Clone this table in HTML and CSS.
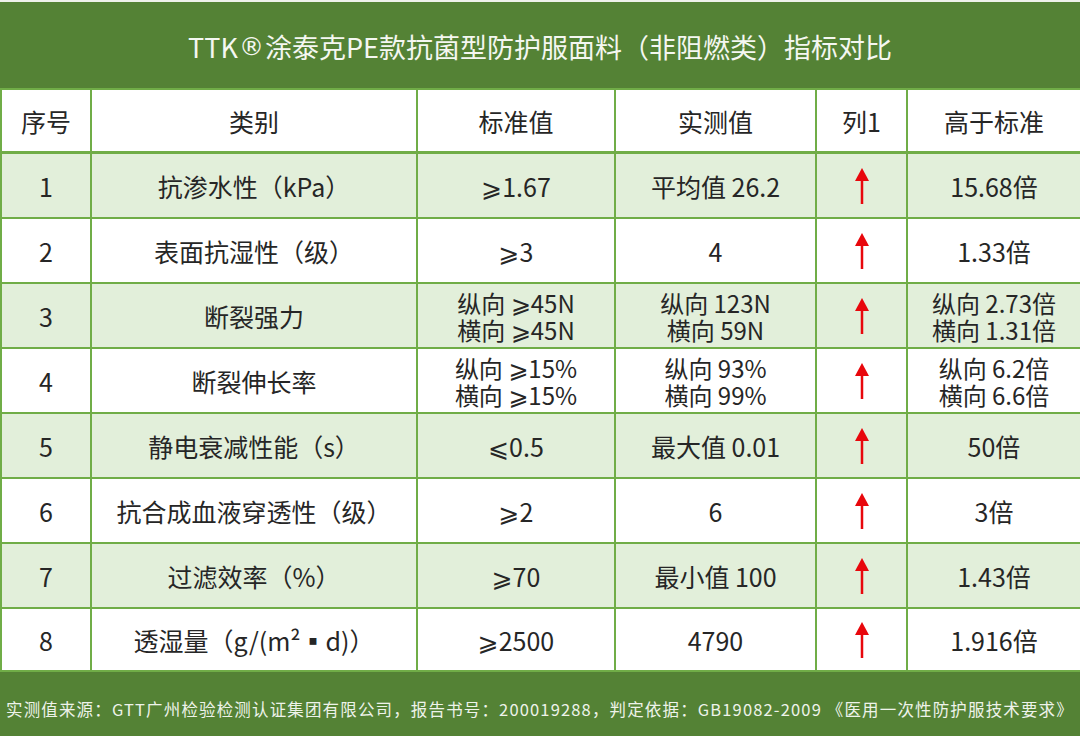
FILE: index.html
```html
<!DOCTYPE html>
<html lang="zh">
<head>
<meta charset="utf-8">
<title>TTK涂泰克PE款抗菌型防护服面料指标对比</title>
<link rel="stylesheet" href="styles.css">
</head>
<body>
<div class="page">
  <div class="title">TTK<span class="reg">®</span>涂泰克PE款抗菌型防护服面料（非阻燃类）指标对比</div>
  <table class="grid">
    <colgroup>
      <col class="c-no"><col class="c-cat"><col class="c-std"><col class="c-real"><col class="c-arrow"><col class="c-ratio">
    </colgroup>
    <thead>
      <tr class="head"><th>序号</th><th>类别</th><th>标准值</th><th>实测值</th><th>列1</th><th>高于标准</th></tr>
    </thead>
    <tbody>
      <tr class="odd"><td>1</td><td>抗渗水性（kPa）</td><td>⩾1.67</td><td>平均值 26.2</td><td><svg class="arrow" viewBox="0 0 16 36"><polygon points="8,0 1,13 15,13"/><rect x="6.75" y="11" width="2.5" height="25"/></svg></td><td>15.68倍</td></tr>
      <tr><td>2</td><td>表面抗湿性（级）</td><td>⩾3</td><td>4</td><td><svg class="arrow" viewBox="0 0 16 36"><polygon points="8,0 1,13 15,13"/><rect x="6.75" y="11" width="2.5" height="25"/></svg></td><td>1.33倍</td></tr>
      <tr class="odd two"><td>3</td><td>断裂强力</td><td><div class="ln">纵向 ⩾45N</div><div class="ln">横向 ⩾45N</div></td><td><div class="ln">纵向 123N</div><div class="ln">横向 59N</div></td><td><svg class="arrow" viewBox="0 0 16 36"><polygon points="8,0 1,13 15,13"/><rect x="6.75" y="11" width="2.5" height="25"/></svg></td><td><div class="ln">纵向 2.73倍</div><div class="ln">横向 1.31倍</div></td></tr>
      <tr class="two"><td>4</td><td>断裂伸长率</td><td><div class="ln">纵向 ⩾15%</div><div class="ln">横向 ⩾15%</div></td><td><div class="ln">纵向 93%</div><div class="ln">横向 99%</div></td><td><svg class="arrow" viewBox="0 0 16 36"><polygon points="8,0 1,13 15,13"/><rect x="6.75" y="11" width="2.5" height="25"/></svg></td><td><div class="ln">纵向 6.2倍</div><div class="ln">横向 6.6倍</div></td></tr>
      <tr class="odd"><td>5</td><td>静电衰减性能（s）</td><td>⩽0.5</td><td>最大值 0.01</td><td><svg class="arrow" viewBox="0 0 16 36"><polygon points="8,0 1,13 15,13"/><rect x="6.75" y="11" width="2.5" height="25"/></svg></td><td>50倍</td></tr>
      <tr><td>6</td><td>抗合成血液穿透性（级）</td><td>⩾2</td><td>6</td><td><svg class="arrow" viewBox="0 0 16 36"><polygon points="8,0 1,13 15,13"/><rect x="6.75" y="11" width="2.5" height="25"/></svg></td><td>3倍</td></tr>
      <tr class="odd"><td>7</td><td>过滤效率（%）</td><td>⩾70</td><td>最小值 100</td><td><svg class="arrow" viewBox="0 0 16 36"><polygon points="8,0 1,13 15,13"/><rect x="6.75" y="11" width="2.5" height="25"/></svg></td><td>1.43倍</td></tr>
      <tr class="last"><td>8</td><td>透湿量（g/(m²▪d)）</td><td>⩾2500</td><td>4790</td><td><svg class="arrow" viewBox="0 0 16 36"><polygon points="8,0 1,13 15,13"/><rect x="6.75" y="11" width="2.5" height="25"/></svg></td><td>1.916倍</td></tr>
    </tbody>
  </table>
  <div class="footer">实测值来源：GTT广州检验检测认证集团有限公司，报告书号：200019288，判定依据：GB19082-2009 《医用一次性防护服技术要求》</div>
</div>
</body>
</html>
```

FILE: styles.css
```css
html, body {
  margin: 0;
  padding: 0;
  background: #ffffff;
}

.page {
  width: 1080px;
  height: 736px;
  overflow: hidden;
  font-family: "Noto Sans CJK SC", "DejaVu Sans", sans-serif;
  color: #262626;
}

.title {
  height: 88px;
  border-top: 2px solid #eef2ea;
  background: #548235;
  color: #f4f7f1;
  font-size: 27px;
  display: flex;
  align-items: center;
  justify-content: center;
  padding-top: 2px;
  box-sizing: border-box;
}

.reg {
  font-family: "DejaVu Sans", sans-serif;
  font-size: 25px;
  margin: 0 1px;
}

.grid {
  width: 1080px;
  border-collapse: collapse;
  table-layout: fixed;
}

.c-no { width: 90px; }
.c-cat { width: 326px; }
.c-std { width: 198px; }
.c-real { width: 201px; }
.c-arrow { width: 91px; }
.c-ratio { width: 174px; }

.grid th,
.grid td {
  border: 2px solid #70ad47;
  text-align: center;
  vertical-align: middle;
  padding: 0;
  font-size: 25px;
  font-weight: 400;
  line-height: 30px;
}

.grid .head th {
  height: 61px;
  border-bottom: 3px solid #70ad47;
  background: #ffffff;
}

.grid tbody td {
  height: 63px;
}

.grid tr.last td {
  height: 61px;
}

.grid tr.odd td {
  background: #e2efda;
}

.ln {
  height: 27px;
  line-height: 27px;
  font-size: 24px;
}

.arrow {
  display: block;
  width: 16px;
  height: 36px;
  margin: 0 auto;
  fill: #e8070c;
}

.footer {
  height: 66px;
  background: #548235;
  color: #eef3ea;
  font-size: 16.5px;
  display: flex;
  align-items: center;
  padding: 8px 0 0 6px;
  box-sizing: border-box;
  white-space: nowrap;
  letter-spacing: 1.15px;
}
```
